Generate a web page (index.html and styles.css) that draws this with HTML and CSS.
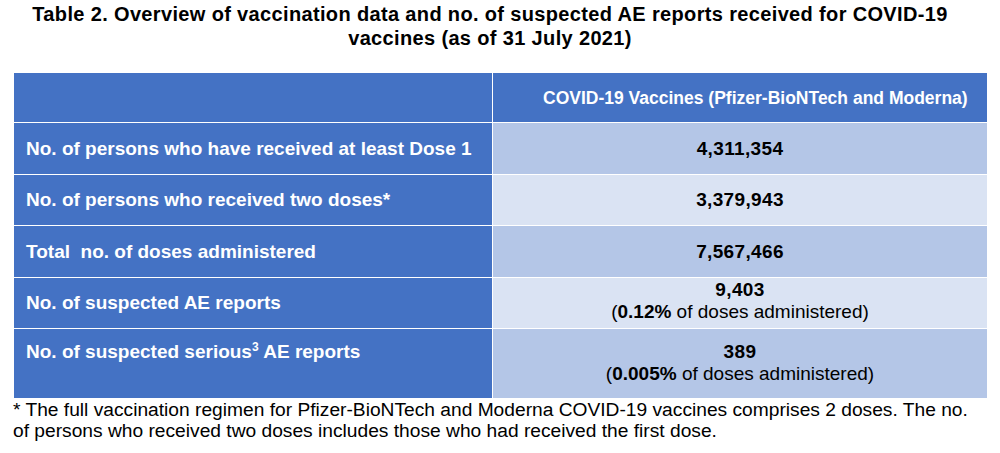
FILE: index.html
```html
<!DOCTYPE html>
<html lang="en">
<head>
<meta charset="utf-8">
<title>Table 2</title>
<link rel="stylesheet" href="styles.css">
</head>
<body>
<div class="page">
  <h1 class="title">Table 2. Overview of vaccination data and no. of suspected AE reports received for COVID-19 vaccines (as of 31 July 2021)</h1>
  <table class="data">
    <colgroup>
      <col class="col-label">
      <col class="col-value">
    </colgroup>
    <thead>
      <tr class="row-head">
        <th class="label"></th>
        <th class="head-value">COVID-19 Vaccines (Pfizer-BioNTech and Moderna)</th>
      </tr>
    </thead>
    <tbody>
      <tr class="row-1">
        <th class="label">No. of persons who have received at least Dose 1</th>
        <td class="value dark">4,311,354</td>
      </tr>
      <tr class="row-2">
        <th class="label">No. of persons who received two doses*</th>
        <td class="value light">3,379,943</td>
      </tr>
      <tr class="row-3">
        <th class="label">Total&nbsp; no. of doses administered</th>
        <td class="value dark">7,567,466</td>
      </tr>
      <tr class="row-4">
        <th class="label">No. of suspected AE reports</th>
        <td class="value light top-tight"><span class="num">9,403</span><br><span class="sub">(<b>0.12%</b> of doses administered)</span></td>
      </tr>
      <tr class="row-5">
        <th class="label top">No. of suspected serious<sup>3</sup> AE reports</th>
        <td class="value dark top"><span class="num">389</span><br><span class="sub">(<b>0.005%</b> of doses administered)</span></td>
      </tr>
    </tbody>
  </table>
  <p class="note">* The full vaccination regimen for Pfizer-BioNTech and Moderna COVID-19 vaccines comprises 2 doses. The no. of persons who received two doses includes those who had received the first dose.</p>
</div>
</body>
</html>
```

FILE: styles.css
```css
html, body {
  margin: 0;
  padding: 0;
  background: #ffffff;
}

.page {
  width: 974px;
  padding: 0 13px;
  font-family: "Liberation Sans", Arial, sans-serif;
  color: #000;
}

.title {
  margin: 0;
  padding: 2px 20px 0 0;
  font-size: 20px;
  letter-spacing: 0.35px;
  line-height: 24px;
  font-weight: bold;
  text-align: center;
}

.data {
  margin-top: 22px;
  width: 974px;
  border-collapse: collapse;
  table-layout: fixed;
}

.col-label { width: 479px; }
.col-value { width: 495px; }

.data th,
.data td {
  border: 1.5px solid #ffffff;
  padding: 0;
  font-size: 19px;
  line-height: 22px;
  font-weight: bold;
  vertical-align: middle;
}

.label {
  background: #4472c4;
  color: #ffffff;
  text-align: left;
  padding-left: 12px !important;
}

.data .head-value {
  background: #4472c4;
  color: #ffffff;
  text-align: left;
  padding-left: 50px;
  font-size: 17.5px;
}

.value {
  text-align: center;
  color: #000;
  letter-spacing: 0.35px;
}

.value.dark { background: #b4c6e7; }
.value.light { background: #dae3f3; }

.sub {
  font-weight: normal;
  letter-spacing: 0;
}

.sub b { font-weight: bold; }

.data sup {
  font-size: 12px;
  line-height: 0;
  vertical-align: 7px;
}

.row-head { height: 50px; }
.row-1 { height: 52px; }
.row-2 { height: 51px; }
.row-3 { height: 52px; }
.row-4 { height: 51px; }
.row-5 { height: 70px; }

.data .top {
  vertical-align: top;
  padding-top: 12px;
}

.data .top-tight {
  vertical-align: top;
  padding-top: 1px;
}

.note {
  margin: 0;
  padding-right: 18px;
  font-size: 19.2px;
  line-height: 21px;
}
```
